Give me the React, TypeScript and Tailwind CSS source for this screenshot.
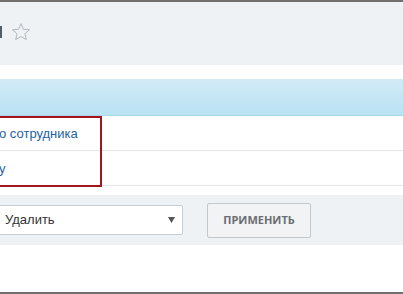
export default function App() {
  return (
    <main className="relative h-[294px] w-[403px] overflow-hidden bg-white font-['Liberation_Sans',Arial,sans-serif]">
      <div className="h-[2px] bg-[#707070]" />

      <header className="flex h-[63px] items-center gap-[9px] bg-[#eef2f4] pb-[3px]">
        <span className="h-[12px] w-[2px] bg-[#535c69]" />
        <svg width="20" height="20" viewBox="0 0 24 24" className="-mt-[1px]">
          <path
            d="M12 2l2.9 6.7 7.3.6-5.5 4.8 1.7 7.1L12 17.4l-6.4 3.8 1.7-7.1-5.5-4.8 7.3-.6z"
            fill="none"
            stroke="#b4b9be"
            strokeWidth="1.2"
            strokeLinejoin="round"
          />
        </svg>
      </header>

      <div className="h-[14px]" />

      <div className="h-[37px] border-b border-[#a9d6e9] bg-gradient-to-b from-[#d2ebf6] to-[#b9e2f3]" />

      <div className="flex h-[35px] items-center border-b border-[#e4e4e4] pt-[1px] text-[13px] text-[#2563a0]">
        <span className="-ml-[1px]">о сотрудника</span>
      </div>
      <div className="flex h-[35px] items-center border-b border-[#e4e4e4] pt-[1px] text-[13px] text-[#2563a0]">
        <span className="-ml-[1px]">у</span>
      </div>

      <div className="h-[9px]" />

      <div className="flex h-[50px] items-center gap-[24px] bg-[#eef2f4]">
        <div className="-ml-[5px] flex h-[30px] w-[188px] items-center justify-between rounded-[2px] border border-[#c6cdd3] bg-white pl-[9px] pr-[7px] text-[13px] text-[#333]">
          <span>Удалить</span>
          <svg width="7" height="6" viewBox="0 0 7 6">
            <path d="M0 0h7L3.5 6z" fill="#555" />
          </svg>
        </div>
        <button className="flex h-[35px] w-[104px] items-center justify-center rounded-[2px] border border-[#c3c8cd] bg-[#f1f3f5] font-['Open_Sans',sans-serif] text-[11px] font-bold text-[#6a6e73]">
          ПРИМЕНИТЬ
        </button>
      </div>

      <div className="absolute bottom-0 left-0 right-0 h-[2px] bg-[#707070]" />

      <div className="absolute left-[-10px] top-[116px] h-[71px] w-[112px] border-2 border-[#a3141c]" />
    </main>
  );
}
